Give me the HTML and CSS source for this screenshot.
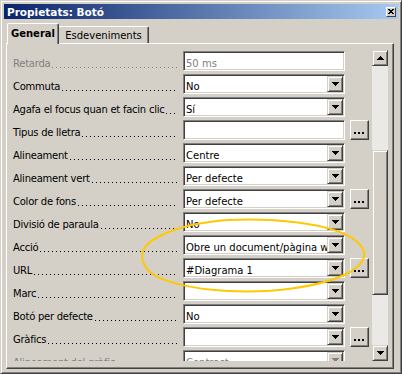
FILE: index.html
```html
<!DOCTYPE html>
<html lang="ca">
<head>
    <meta charset="UTF-8">
    <meta name="viewport" content="width=device-width, initial-scale=1.0">
    <title>Propietats: Botó</title>
    <link rel="stylesheet" href="styles.css">
</head>
<body>

<div class="window">
    <!-- Title bar -->
    <div class="titlebar">
        <span class="title">Propietats: Botó</span>
        <span class="close">
            <svg width="6" height="5" viewBox="0 0 6 5"><path d="M0 0h2v1H0zM4 0h2v1H4zM1 1h4v1H1zM2 2h2v1H2zM1 3h4v1H1zM0 4h2v1H0zM4 4h2v1H4z"/></svg>
        </span>
    </div>

    <!-- Tabs -->
    <div class="tabs">
        <div class="tab active">General</div>
        <div class="tab">Esdeveniments</div>
    </div>

    <div class="panel">
        <div class="list">
            <div class="rows">
                <div class="row disabled">
                    <span class="label">Retarda</span><span class="dots"></span>
                    <div class="field"><span class="value">50 ms</span></div>
                    <span class="slot"></span>
                </div>
                <div class="row">
                    <span class="label">Commuta</span><span class="dots"></span>
                    <div class="field"><span class="value">No</span><span class="drop"><svg class="arrow" viewBox="0 0 7 4"><path d="M0 0h7v1H0zM1 1h5v1H1zM2 2h3v1H2zM3 3h1v1H3z"/></svg></span></div>
                    <span class="slot"></span>
                </div>
                <div class="row">
                    <span class="label">Agafa el focus quan et facin clic</span><span class="dots"></span>
                    <div class="field"><span class="value">Sí</span><span class="drop"><svg class="arrow" viewBox="0 0 7 4"><path d="M0 0h7v1H0zM1 1h5v1H1zM2 2h3v1H2zM3 3h1v1H3z"/></svg></span></div>
                    <span class="slot"></span>
                </div>
                <div class="row">
                    <span class="label">Tipus de lletra</span><span class="dots"></span>
                    <div class="field"><span class="value"></span></div>
                    <span class="slot more"></span>
                </div>
                <div class="row">
                    <span class="label">Alineament</span><span class="dots"></span>
                    <div class="field"><span class="value">Centre</span><span class="drop"><svg class="arrow" viewBox="0 0 7 4"><path d="M0 0h7v1H0zM1 1h5v1H1zM2 2h3v1H2zM3 3h1v1H3z"/></svg></span></div>
                    <span class="slot"></span>
                </div>
                <div class="row">
                    <span class="label">Alineament vert</span><span class="dots"></span>
                    <div class="field"><span class="value">Per defecte</span><span class="drop"><svg class="arrow" viewBox="0 0 7 4"><path d="M0 0h7v1H0zM1 1h5v1H1zM2 2h3v1H2zM3 3h1v1H3z"/></svg></span></div>
                    <span class="slot"></span>
                </div>
                <div class="row">
                    <span class="label">Color de fons</span><span class="dots"></span>
                    <div class="field"><span class="value">Per defecte</span><span class="drop"><svg class="arrow" viewBox="0 0 7 4"><path d="M0 0h7v1H0zM1 1h5v1H1zM2 2h3v1H2zM3 3h1v1H3z"/></svg></span></div>
                    <span class="slot more"></span>
                </div>
                <div class="row">
                    <span class="label">Divisió de paraula</span><span class="dots"></span>
                    <div class="field"><span class="value">No</span><span class="drop"><svg class="arrow" viewBox="0 0 7 4"><path d="M0 0h7v1H0zM1 1h5v1H1zM2 2h3v1H2zM3 3h1v1H3z"/></svg></span></div>
                    <span class="slot"></span>
                </div>
                <div class="row">
                    <span class="label">Acció</span><span class="dots"></span>
                    <div class="field"><span class="value">Obre un document/pàgina web</span><span class="drop"><svg class="arrow" viewBox="0 0 7 4"><path d="M0 0h7v1H0zM1 1h5v1H1zM2 2h3v1H2zM3 3h1v1H3z"/></svg></span></div>
                    <span class="slot"></span>
                </div>
                <div class="row">
                    <span class="label">URL</span><span class="dots"></span>
                    <div class="field"><span class="value">#Diagrama 1</span><span class="drop"><svg class="arrow" viewBox="0 0 7 4"><path d="M0 0h7v1H0zM1 1h5v1H1zM2 2h3v1H2zM3 3h1v1H3z"/></svg></span></div>
                    <span class="slot more"></span>
                </div>
                <div class="row">
                    <span class="label">Marc</span><span class="dots"></span>
                    <div class="field"><span class="value"></span><span class="drop"><svg class="arrow" viewBox="0 0 7 4"><path d="M0 0h7v1H0zM1 1h5v1H1zM2 2h3v1H2zM3 3h1v1H3z"/></svg></span></div>
                    <span class="slot"></span>
                </div>
                <div class="row">
                    <span class="label">Botó per defecte</span><span class="dots"></span>
                    <div class="field"><span class="value">No</span><span class="drop"><svg class="arrow" viewBox="0 0 7 4"><path d="M0 0h7v1H0zM1 1h5v1H1zM2 2h3v1H2zM3 3h1v1H3z"/></svg></span></div>
                    <span class="slot"></span>
                </div>
                <div class="row">
                    <span class="label">Gràfics</span><span class="dots"></span>
                    <div class="field"><span class="value"></span><span class="drop"><svg class="arrow" viewBox="0 0 7 4"><path d="M0 0h7v1H0zM1 1h5v1H1zM2 2h3v1H2zM3 3h1v1H3z"/></svg></span></div>
                    <span class="slot more"></span>
                </div>
                <div class="row disabled">
                    <span class="label">Alineament del gràfic</span><span class="dots"></span>
                    <div class="field"><span class="value">Contrast</span><span class="drop"><svg class="arrow" viewBox="0 0 7 4"><path d="M0 0h7v1H0zM1 1h5v1H1zM2 2h3v1H2zM3 3h1v1H3z"/></svg></span></div>
                    <span class="slot"></span>
                </div>
            </div>

            <!-- Vertical scrollbar -->
            <div class="scrollbar">
                <div class="sb-btn"><svg class="arrow" viewBox="0 0 7 4"><path d="M3 0h1v1H3zM2 1h3v1H2zM1 2h5v1H1zM0 3h7v1H0z"/></svg></div>
                <div class="sb-track"><div class="sb-thumb"></div></div>
                <div class="sb-btn"><svg class="arrow" viewBox="0 0 7 4"><path d="M0 0h7v1H0zM1 1h5v1H1zM2 2h3v1H2zM3 3h1v1H3z"/></svg></div>
            </div>
        </div>
    </div>

    <!-- Hand-drawn highlight over the Acció / URL rows -->
    <svg class="marker" width="402" height="374" viewBox="0 0 402 374">
        <path d="M142 256C142 240 175 224 228 220C270 218 330 222 355 240C370 252 366 262 350 272C320 288 270 293 228 291C190 289 160 281 150 272C144 266 142 261 142 256Z"/>
    </svg>
</div>

</body>
</html>
```

FILE: styles.css
```css
* {
    box-sizing: border-box;
}

body {
    margin: 0;
    background: #d4d0c8;
    font-family: "DejaVu Sans", sans-serif;
    font-size: 10px;
    color: #000;
}

/* Window frame */
.window {
    position: relative;
    width: 402px;
    height: 374px;
    padding: 3px;
    border: 1px solid;
    border-color: #d4d0c8 #404040 #404040 #d4d0c8;
    box-shadow: inset 1px 1px #fff, inset -1px -1px #808080;
    display: flex;
    flex-direction: column;
    overflow: hidden;
}

.titlebar {
    height: 15px;
    flex: none;
    display: flex;
    align-items: center;
    justify-content: space-between;
    background: linear-gradient(to right, #0a246a, #a6caf0);
}
.title {
    padding: 1px 0 0 3px;
    line-height: 14px;
    font-size: 10.5px;
    font-weight: bold;
    color: #fff;
}
.close {
    width: 10px;
    height: 10px;
    margin-right: 2px;
    background: #d4d0c8;
    border: 1px solid;
    border-color: #fff #404040 #404040 #fff;
    display: flex;
    align-items: center;
    justify-content: center;
}
.close svg {
    display: block;
}

/* Tabs */
.tabs {
    position: relative;
    z-index: 1;
    display: flex;
    align-items: flex-end;
    height: 21px;
    margin: 4px 0 -1px 3px;
    flex: none;
}
.tab {
    height: 17px;
    margin-bottom: 1px;
    width: 90px;
    padding-top: 3px;
    line-height: 12px;
    text-align: center;
    background: #d4d0c8;
    border-top: 1px solid #fff;
    border-right: 1px solid #404040;
    box-shadow: inset -1px 0 #808080;
    border-top-right-radius: 2px;
}
.tab.active {
    width: 52px;
    height: 21px;
    margin-bottom: 0;
    padding-top: 4px;
    font-weight: bold;
    border-left: 1px solid #fff;
    border-top-left-radius: 2px;
}

/* Tab page */
.panel {
    width: 388px;
    height: 326px;
    margin-left: 2px;
    padding-top: 6px;
    flex: none;
    border: 1px solid;
    border-color: #fff #404040 #404040 #fff;
    box-shadow: inset -1px -1px #808080;
}

.list {
    display: flex;
    height: 312px;
}

.rows {
    width: 365px;
    height: 311px;
    overflow: hidden;
}

.row {
    display: flex;
    align-items: flex-start;
    height: 23px;
    padding: 1px 3px 0 6px;
}

.label {
    padding-top: 3px;
    line-height: 20px;
    white-space: nowrap;
    letter-spacing: -0.25px;
}

/* Dot leader between label and field */
.dots {
    flex: 1;
    height: 1px;
    margin: 16px 6px 0 2px;
    background: repeating-linear-gradient(to right, #000 0 1px, transparent 1px 4px);
}

.field {
    width: 162px;
    height: 20px;
    flex: none;
    display: flex;
    padding: 1px;
    background: #fff;
    border: 1px solid;
    border-color: #808080 #fff #fff #808080;
    box-shadow: inset 1px 1px #404040, inset -1px -1px #d4d0c8;
}
.value {
    flex: 1;
    height: 16px;
    padding-left: 1px;
    line-height: 21px;
    white-space: nowrap;
    overflow: hidden;
}

.drop,
.sb-btn {
    display: flex;
    align-items: center;
    justify-content: center;
    background: #d4d0c8;
    border: 1px solid;
    border-color: #d4d0c8 #404040 #404040 #d4d0c8;
    box-shadow: inset 1px 1px #fff, inset -1px -1px #808080;
}
.drop {
    width: 16px;
    height: 16px;
    flex: none;
}

.arrow {
    display: block;
    width: 7px;
    height: 4px;
    fill: #000;
    shape-rendering: crispEdges;
}

.slot {
    width: 19px;
    height: 20px;
    margin-left: 5px;
    flex: none;
}
.more {
    position: relative;
    background: #d4d0c8;
    border: 1px solid;
    border-color: #fff #404040 #404040 #fff;
    box-shadow: inset -1px -1px #808080;
}
.more::after {
    content: "";
    position: absolute;
    left: 3px;
    top: 11px;
    width: 2px;
    height: 2px;
    background: #000;
    box-shadow: 4px 0 #000, 8px 0 #000;
}

.disabled .label,
.disabled .value {
    color: #808080;
}
.disabled .dots {
    background: repeating-linear-gradient(to right, #808080 0 1px, transparent 1px 4px);
}
.disabled .arrow {
    fill: #808080;
}

/* Scrollbar */
.scrollbar {
    width: 16px;
    height: 311px;
    display: flex;
    flex-direction: column;
}
.sb-btn {
    height: 16px;
    flex: none;
}
.sb-track {
    flex: 1;
    padding-top: 84px;
    background: #ebe9e5;
}
.sb-thumb {
    height: 145px;
    background: #d4d0c8;
    border: 1px solid;
    border-color: #d4d0c8 #404040 #404040 #d4d0c8;
    box-shadow: inset 1px 1px #fff, inset -1px -1px #808080;
}

/* Freehand highlight */
.marker {
    position: absolute;
    left: -1px;
    top: -1px;
    pointer-events: none;
    fill: none;
    stroke: #ffc800;
    stroke-width: 2;
}
```
